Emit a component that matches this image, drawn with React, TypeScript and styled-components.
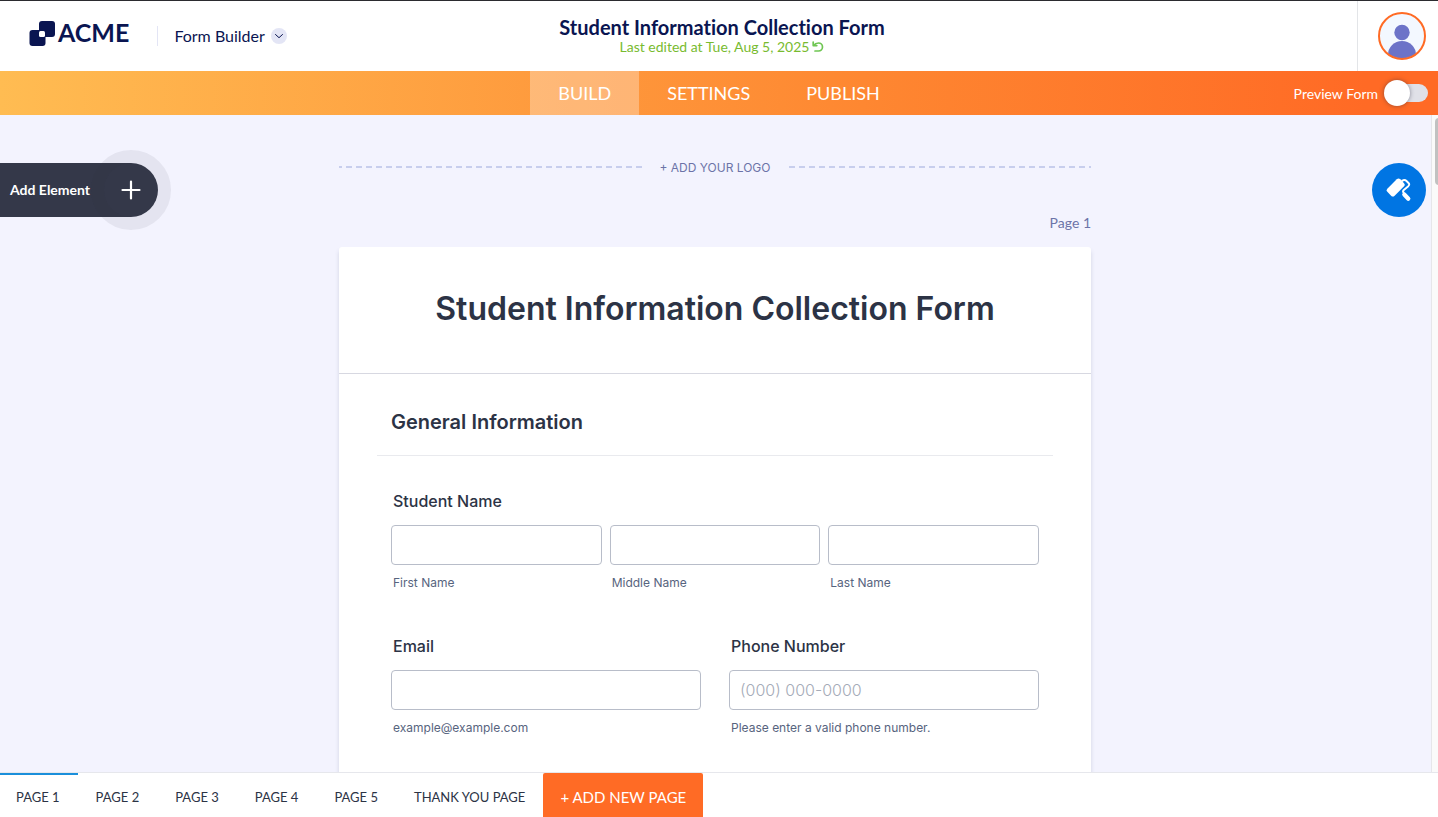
import React from 'react';
import styled, { createGlobalStyle } from 'styled-components';

const GlobalStyle = createGlobalStyle`
  *, *::before, *::after { box-sizing: border-box; }
  html, body, #root { height: 100%; }
  body {
    margin: 0;
    font-family: Lato, sans-serif;
    font-variant-ligatures: none;
    color: #0a1551;
    background: #f3f3fe;
    overflow: hidden;
  }
  button { font: inherit; color: inherit; border: 0; background: none; padding: 0; cursor: pointer; }
  h1, h2, p { margin: 0; }
`;

const Shell = styled.div`
  display: flex;
  flex-direction: column;
  height: 100%;
`;

const TopBar = styled.header`
  display: grid;
  grid-template-columns: 1fr auto 1fr;
  align-items: center;
  height: 71px;
  flex: none;
  border-top: 1px solid #2b2b2f;
  background: #fff;
`;

const Brand = styled.div`
  display: flex;
  align-items: center;
  padding-left: 29px;
`;

const LogoLink = styled.a`
  display: flex;
  align-items: flex-start;
  gap: 3px;
  height: 26px;
  margin-bottom: 4px;
  color: #0a1551;
  font: 700 25px/22px Lato, sans-serif;
  text-decoration: none;
`;

const Divider = styled.span`
  width: 1px;
  height: 20px;
  margin: 0 16px 0 28px;
  background: #e3e5f5;
`;

const ProductButton = styled.button`
  display: flex;
  align-items: center;
  gap: 6px;
  font-size: 16px;
  line-height: 20px;
`;

const TitleBlock = styled.div`
  padding: 0 0 2px 6px;
  text-align: center;
`;

const DocTitle = styled.div`
  font-size: 20px;
  line-height: 24px;
  font-weight: 700;
`;

const LastEdited = styled.div`
  display: flex;
  justify-content: center;
  align-items: center;
  gap: 3px;
  color: #78bb2f;
  font-size: 14px;
  line-height: 16px;
`;

const Account = styled.div`
  justify-self: end;
  display: flex;
  align-items: center;
  height: 70px;
  padding: 0 12px 0 20px;
  border-left: 1px solid #e3e5e8;
`;

const AvatarButton = styled.button`
  display: flex;
  width: 48px;
  height: 48px;
  border-radius: 50%;
`;

const NavBar = styled.nav`
  display: grid;
  grid-template-columns: 1fr auto 1fr;
  height: 44px;
  flex: none;
  color: #fff;
  background: linear-gradient(90deg, #ffbc52 0%, #fe8731 60%, #ff6a25 95%);
`;

const NavTabs = styled.div`
  grid-column: 2;
  display: flex;
`;

const NavTab = styled.a<{ $active?: boolean }>`
  padding: 0 28px;
  color: #fff;
  font-size: 18px;
  line-height: 44px;
  text-decoration: none;
  background: ${(p) => (p.$active ? 'rgba(255,255,255,0.3)' : 'transparent')};
`;

const PreviewLabel = styled.label`
  justify-self: end;
  display: flex;
  align-items: center;
  gap: 6px;
  padding-right: 10px;
  font-size: 14px;
`;

const Switch = styled.input`
  appearance: none;
  display: flex;
  position: relative;
  width: 44px;
  height: 26px;
  margin: 0;
  cursor: pointer;
  &::before {
    content: '';
    position: absolute;
    inset: 4px 0 4px 10px;
    border-radius: 9px;
    background: #e0e1e8;
  }
  &::after {
    content: '';
    position: relative;
    width: 26px;
    height: 26px;
    border-radius: 50%;
    background: #fff;
    box-shadow: 0 0 4px rgba(40, 40, 60, 0.5);
  }
  &:checked::after { margin-left: 18px; }
`;

const Workspace = styled.main`
  position: relative;
  flex: 1;
  min-height: 0;
  overflow: hidden;
  padding: 40px 8px 0 0;
`;

const ScrollTrack = styled.div`
  position: absolute;
  top: 0;
  right: 0;
  bottom: 0;
  width: 7px;
  border-left: 1px solid #e6e6ea;
  background: #fafafa;
  overflow: hidden;
  &::after {
    content: '';
    position: absolute;
    top: 3px;
    left: 3px;
    width: 8px;
    height: 67px;
    border-radius: 4px;
    background: #c1c1c1;
  }
`;

const AddElement = styled.button`
  position: absolute;
  top: 48px;
  left: 0;
  display: flex;
  align-items: center;
  justify-content: space-between;
  width: 158px;
  height: 54px;
  padding: 0 17px 0 10px;
  border-radius: 0 27px 27px 0;
  background: #343849;
  color: #fff;
  font-size: 14px;
  line-height: 20px;
  font-weight: 700;
  &::after {
    content: '';
    position: absolute;
    top: -13px;
    right: -13px;
    width: 80px;
    height: 80px;
    border-radius: 50%;
    border: 13px solid rgba(40, 40, 60, 0.07);
  }
`;

const DesignerButton = styled.button`
  position: absolute;
  top: 48px;
  right: 12px;
  display: flex;
  align-items: center;
  justify-content: center;
  width: 54px;
  height: 54px;
  border-radius: 50%;
  background: #0075e3;
`;

const Canvas = styled.div`
  width: 100%;
  max-width: 752px;
  margin: 0 auto;
`;

const AddLogo = styled.button`
  display: flex;
  align-items: center;
  gap: 18px;
  width: 100%;
  height: 24px;
  color: #6c73a8;
  font: 400 12px/24px Inter, sans-serif;
`;

const AddLogoText = styled.span`
  padding-top: 2px;
`;

const Dashes = styled.span<{ $mirror?: boolean }>`
  flex: 1;
  height: 2px;
  background: repeating-linear-gradient(
    ${(p) => (p.$mirror ? '90deg' : '270deg')},
    #c8ceed 0 6px,
    transparent 6px 10px
  );
`;

const PageLabel = styled.p`
  margin: 33px 0 14px;
  text-align: right;
  color: #6c73a8;
  font-size: 14px;
  line-height: 21px;
`;

const FormCard = styled.form`
  min-height: 700px;
  border-radius: 3px;
  background: #fff;
  color: #2c3345;
  font-family: Inter, sans-serif;
  box-shadow: 0 4px 4px rgba(87, 100, 126, 0.21);
`;

const FormHeader = styled.header`
  padding: 41px 38px 43px;
  border-bottom: 1px solid #d7d8e1;
  text-align: center;
`;

const FormTitle = styled.h1`
  font-size: 32px;
  line-height: 42px;
  font-weight: 600;
`;

const SectionHeading = styled.h2`
  margin: 0 38px;
  padding: 34px 14px 19px;
  border-bottom: 1px solid #e9eaee;
  font-size: 20px;
  line-height: 28px;
  font-weight: 600;
`;

const Fields = styled.div`
  display: flex;
  flex-direction: column;
  gap: 43px;
  padding: 34px 52px 0;
`;

const FieldSet = styled.fieldset`
  margin: 0;
  padding: 0;
  border: 0;
  min-width: 0;
`;

const FieldLabel = styled.label`
  display: block;
  padding: 0 2px;
  margin-bottom: 13px;
  font-size: 16px;
  line-height: 22px;
  font-weight: 500;
`;

const Columns = styled.div<{ $count: number; $gap: number }>`
  display: grid;
  grid-template-columns: repeat(${(p) => p.$count}, 1fr);
  gap: ${(p) => p.$gap}px;
`;

const TextInput = styled.input`
  display: block;
  width: 100%;
  height: 40px;
  padding: 0 10px;
  border: 1px solid #b8bdc9;
  border-radius: 4px;
  background: #fff;
  color: #2c3345;
  font: 300 16px Inter, sans-serif;
  &::placeholder { color: #a5abb8; opacity: 1; }
`;

const Hint = styled.label`
  display: block;
  margin-top: 9px;
  padding: 0 2px;
  color: #57647e;
  font-size: 12px;
  line-height: 18px;
`;

const PageTabs = styled.footer`
  display: flex;
  height: 45px;
  flex: none;
  border-top: 1px solid #e6e7ec;
  background: #fff;
  color: #2c3345;
`;

const PageTab = styled.button<{ $active?: boolean }>`
  padding: 2px 18px 0;
  font-size: 13px;
  border-top: 2px solid ${(p) => (p.$active ? '#1a8fdb' : 'transparent')};
  &:first-child { padding-left: 16px; }
`;

const AddPage = styled.button`
  padding: 4px 17px 0;
  border-radius: 2px 2px 0 0;
  background: #ff6b25;
  color: #fff;
  font-size: 15px;
`;

const nameParts = ['First Name', 'Middle Name', 'Last Name'];
const pages = ['PAGE 1', 'PAGE 2', 'PAGE 3', 'PAGE 4', 'PAGE 5', 'THANK YOU PAGE'];

export default function App() {
  return (
    <Shell>
      <GlobalStyle />
      <TopBar>
        <Brand>
          <LogoLink href="#">
            <svg width="26" height="26" viewBox="0 0 26 26" fill="#0a1551">
              <rect x="0.500" y="9" width="16" height="16" rx="3" />
              <rect x="10" y="0" width="16" height="16" rx="3" />
              <rect x="10" y="10" width="6" height="6" rx="1.500" fill="#fff" />
            </svg>
            ACME
          </LogoLink>
          <Divider />
          <ProductButton type="button">
            Form Builder
            <svg width="16" height="16" viewBox="0 0 16 16" fill="none">
              <circle cx="8" cy="8" r="8" fill="#e3e5f5" />
              <path d="M4.500 6.500 8 9.700 11.500 6.500" stroke="#0a1551" strokeLinecap="round" />
            </svg>
          </ProductButton>
        </Brand>
        <TitleBlock>
          <DocTitle>Student Information Collection Form</DocTitle>
          <LastEdited>
            Last edited at Tue, Aug 5, 2025
            <svg width="12" height="12" viewBox="0 0 12 12" fill="none" stroke="#6fc653" strokeWidth="1.700">
              <path d="M1.200 1v3.600h3.600M1.800 4.200C3 2.500 4.500 2 6.500 2a4 4 0 1 1 0 8H3" strokeLinecap="round" strokeLinejoin="round" />
            </svg>
          </LastEdited>
        </TitleBlock>
        <Account>
          <AvatarButton type="button" aria-label="Account">
            <svg width="48" height="48" viewBox="0 0 48 48">
              <defs>
                <clipPath id="avatar"><circle cx="24" cy="24" r="22.500" /></clipPath>
              </defs>
              <circle cx="24" cy="24" r="23" fill="#f3f8ff" />
              <g fill="#6c73c8" clipPath="url(#avatar)">
                <circle cx="24" cy="20.500" r="7.700" />
                <path d="M10 46V43a14 14 0 0 1 28 0v3z" />
              </g>
              <circle cx="24" cy="24" r="23" fill="none" stroke="#ff6b25" strokeWidth="2" />
            </svg>
          </AvatarButton>
        </Account>
      </TopBar>

      <NavBar>
        <NavTabs>
          <NavTab href="#build" $active>BUILD</NavTab>
          <NavTab href="#settings">SETTINGS</NavTab>
          <NavTab href="#publish">PUBLISH</NavTab>
        </NavTabs>
        <PreviewLabel>
          Preview Form
          <Switch type="checkbox" role="switch" />
        </PreviewLabel>
      </NavBar>

      <Workspace>
        <Canvas>
          <AddLogo type="button">
            <Dashes />
            <AddLogoText>+ ADD YOUR LOGO</AddLogoText>
            <Dashes $mirror />
          </AddLogo>
          <PageLabel>Page 1</PageLabel>
          <FormCard>
            <FormHeader>
              <FormTitle>Student Information Collection Form</FormTitle>
            </FormHeader>
            <SectionHeading>General Information</SectionHeading>
            <Fields>
              <FieldSet>
                <FieldLabel as="legend">Student Name</FieldLabel>
                <Columns $count={3} $gap={8}>
                  {nameParts.map((part, i) => (
                    <div key={part}>
                      <TextInput id={`name-${i}`} type="text" />
                      <Hint htmlFor={`name-${i}`}>{part}</Hint>
                    </div>
                  ))}
                </Columns>
              </FieldSet>
              <Columns $count={2} $gap={28}>
                <div>
                  <FieldLabel htmlFor="email">Email</FieldLabel>
                  <TextInput id="email" type="email" />
                  <Hint as="p">example@example.com</Hint>
                </div>
                <div>
                  <FieldLabel htmlFor="phone">Phone Number</FieldLabel>
                  <TextInput id="phone" type="tel" placeholder="(000) 000-0000" />
                  <Hint as="p">Please enter a valid phone number.</Hint>
                </div>
              </Columns>
            </Fields>
          </FormCard>
        </Canvas>
        <ScrollTrack />
        <AddElement type="button">
          Add Element
          <svg width="20" height="20" viewBox="0 0 20 20" stroke="#fff" strokeWidth="2.200" strokeLinecap="round">
            <path d="M10 1.500v17M1.500 10h17" />
          </svg>
        </AddElement>
        <DesignerButton type="button" aria-label="Form Designer">
          <svg width="26" height="26" viewBox="0 0 26 26" fill="none" stroke="#fff" strokeLinecap="round" strokeLinejoin="round">
            <rect x="-9" y="-5" width="18" height="10" rx="2.500" fill="#fff" stroke="none" transform="translate(9.700 10.500) rotate(-45)" />
            <path d="M16 4Q18.500 2 20.500 4L22.500 6Q24 7.500 22.300 9.200L17.800 13Q16.300 14.500 17.800 16" strokeWidth="1.900" />
            <path d="M18.300 17.500l4 4.300" strokeWidth="4.200" />
          </svg>
        </DesignerButton>
      </Workspace>

      <PageTabs>
        {pages.map((page, i) => (
          <PageTab key={page} type="button" $active={i === 0}>{page}</PageTab>
        ))}
        <AddPage type="button">+ ADD NEW PAGE</AddPage>
      </PageTabs>
    </Shell>
  );
}
